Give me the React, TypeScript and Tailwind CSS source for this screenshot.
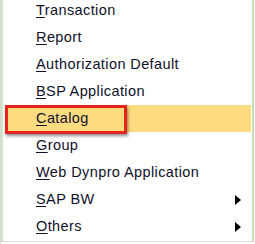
import React from "react";

const items: { label: string; arrow?: boolean }[] = [
  { label: "Transaction" },
  { label: "Report" },
  { label: "Authorization Default" },
  { label: "BSP Application" },
  { label: "Catalog" },
  { label: "Group" },
  { label: "Web Dynpro Application" },
  { label: "SAP BW", arrow: true },
  { label: "Others", arrow: true },
];

function Label({ text }: { text: string }) {
  return (
    <span>
      <span className="underline underline-offset-[2px] decoration-1">{text[0]}</span>
      {text.slice(1)}
    </span>
  );
}

export default function App() {
  return (
    <div
      className="w-[255px] h-[244px] bg-white overflow-hidden text-[#10102a] border-l border-[#d8d8d8]"
      style={{ fontFamily: '"Liberation Sans", Arial, sans-serif' }}
    >
      <div className="h-[242px] w-[253px] border-l-2 border-r-2 border-l-[#cfe6c0] border-r-[#c6e2b4] border-b border-b-[#dcdcdc] overflow-hidden">
        <div className="flex flex-col -mt-[3px] pl-[3px] pr-[1px]">
          {items.map((it, i) => {
            const active = i === 4;
            return (
              <div
                key={it.label}
                className={`relative h-[27px] flex items-center justify-between pl-[30px] pr-[10px] text-[14.5px] tracking-[0.4px] leading-none ${
                  active ? "bg-[#fddc80]" : ""
                }`}
              >
                <Label text={it.label} />
                {it.arrow && (
                  <svg width="6" height="10" viewBox="0 0 6 10">
                    <path d="M0 0 L6 5 L0 10 Z" fill="#000" />
                  </svg>
                )}
                {active && (
                  <div className="absolute left-[-1px] top-0 w-[122px] h-[29px] border-[3px] border-[#e52420] shadow-[1px_2px_3px_rgba(0,0,0,0.45)]" />
                )}
              </div>
            );
          })}
        </div>
      </div>
    </div>
  );
}
